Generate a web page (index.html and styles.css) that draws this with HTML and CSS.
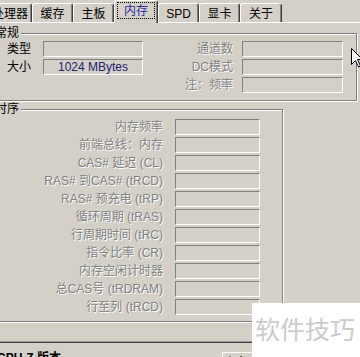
FILE: index.html
```html
<!DOCTYPE html>
<html lang="zh-CN">
<head>
  <meta charset="UTF-8">
  <title>CPU-Z 内存</title>
  <link rel="stylesheet" href="styles.css">
</head>
<body>
  <div class="screen">
    <div class="window">
      <div class="tabs">
        <div class="tab tab-wide">处理器</div>
        <div class="tab">缓存</div>
        <div class="tab">主板</div>
        <div class="tab active"><span class="focus">内存</span></div>
        <div class="tab">SPD</div>
        <div class="tab">显卡</div>
        <div class="tab tab-last">关于</div>
      </div>

      <div class="page">
        <fieldset class="group group-general">
          <legend>常规</legend>
          <div class="general-grid">
            <span class="label">类型</span>
            <span class="field"></span>
            <span class="label-dim">通道数</span>
            <span class="field"></span>

            <span class="label">大小</span>
            <span class="field value">1024 MBytes</span>
            <span class="label-dim">DC模式</span>
            <span class="field"></span>

            <span></span>
            <span></span>
            <span class="label-dim">注：频率</span>
            <span class="field"></span>
          </div>
        </fieldset>

        <fieldset class="group group-timing">
          <legend>时序</legend>
          <div class="timing-grid">
            <span class="label-dim">内存频率</span><span class="field"></span>
            <span class="label-dim">前端总线：内存</span><span class="field"></span>
            <span class="label-dim">CAS# 延迟 (CL)</span><span class="field"></span>
            <span class="label-dim">RAS# 到CAS# (tRCD)</span><span class="field"></span>
            <span class="label-dim">RAS# 预充电 (tRP)</span><span class="field"></span>
            <span class="label-dim">循环周期 (tRAS)</span><span class="field"></span>
            <span class="label-dim">行周期时间 (tRC)</span><span class="field"></span>
            <span class="label-dim">指令比率 (CR)</span><span class="field"></span>
            <span class="label-dim">内存空闲计时器</span><span class="field"></span>
            <span class="label-dim">总CAS号 (tRDRAM)</span><span class="field"></span>
            <span class="label-dim">行至列 (tRCD)</span><span class="field"></span>
          </div>
        </fieldset>
      </div>

      <div class="page-bottom"></div>

      <div class="footer">
        <div class="footer-title">CPU-Z 版本</div>
        <div class="btn">确定</div>
      </div>
    </div>

    <div class="watermark">软件技巧</div>

    <svg class="cursor" width="12" height="20" viewBox="0 0 12 20">
      <path d="M0.5 0.5 L0.5 16.5 L4.5 12.5 L7.5 19 L9.5 18 L6.5 11.5 L11.5 11.5 Z" fill="#fff" stroke="#000" stroke-width="1"/>
    </svg>
  </div>
</body>
</html>
```

FILE: styles.css
```css
html, body {
  margin: 0;
  overflow: hidden;
  background: #d4d0c8;
}

body {
  font-family: "Liberation Sans", "Noto Sans CJK SC", sans-serif;
  font-size: 12px;
  color: #000;
}

.screen {
  width: 360px;
  height: 357px;
  overflow: hidden;
  position: relative;
}

.window {
  width: 400px;
  margin-left: -14px;
}

/* tab strip */
.tabs {
  display: flex;
  align-items: flex-end;
  height: 22px;
  padding-left: 2px;
}

.tab {
  box-sizing: border-box;
  width: 41px;
  height: 19px;
  padding-top: 2px;
  line-height: 16px;
  text-align: center;
  border: 1px solid #fff;
  border-right-color: #404040;
  border-bottom: none;
  border-radius: 3px 3px 0 0;
  box-shadow: inset -1px 0 0 #808080;
}

.tab-wide {
  width: 44px;
}

.tab-last {
  width: 42px;
}

.tab.active {
  width: 44px;
  height: 23px;
  margin-bottom: -1px;
  padding: 1px 2px 0;
  background: #d4d0c8;
  position: relative;
  z-index: 1;
}

.focus {
  display: block;
  height: 16px;
  padding-top: 1px;
  line-height: 16px;
  color: #2a2a9c;
  outline: 1px dotted #000;
  outline-offset: -1px;
}

/* tab page */
.page {
  border-top: 1px solid #fff;
  padding: 3px 0 0 4px;
}

.group {
  margin: 0;
  padding: 0;
  min-width: 0;
  border: 1px solid #808080;
  box-shadow: inset 1px 1px 0 #fff, 1px 1px 0 #fff;
}

.group legend {
  margin-left: 2px;
  padding: 0 2px;
  line-height: 14px;
  background: #d4d0c8;
}

.group-general {
  width: 367px;
  box-sizing: border-box;
}

.group-timing {
  width: 293px;
  box-sizing: border-box;
  margin-top: 1px;
  border-bottom: none;
}

.general-grid {
  display: grid;
  grid-template-columns: 36px 100px 99px 101px;
  grid-auto-rows: 16px;
  row-gap: 2px;
  margin: 1px 0 7px 16px;
  line-height: 16px;
}

.timing-grid {
  display: grid;
  grid-template-columns: 172px 85px;
  grid-auto-rows: 16px;
  row-gap: 2px;
  column-gap: 12px;
  margin: 3px 0 6px 0;
  line-height: 16px;
}

.label {
  white-space: nowrap;
}

.label-dim {
  text-align: right;
  white-space: nowrap;
  color: #808080;
  text-shadow: 1px 1px 0 #fff;
}

.general-grid .label-dim {
  padding-right: 9px;
}

.field {
  box-sizing: border-box;
  height: 16px;
  border-top: 1px solid #808080;
  border-left: 1px solid #808080;
  border-bottom: 1px solid #fff;
  border-right: 1px solid #fff;
}

.field.value {
  text-align: center;
  line-height: 14px;
  color: #22226e;
}

.page-bottom {
  height: 0;
  border-top: 1px solid #808080;
  border-bottom: 1px solid #fff;
}

/* bottom bar */
.footer {
  display: flex;
  align-items: flex-start;
  margin-top: 18px;
  border-top: 1px solid #9a9a9a;
  box-shadow: inset 0 1px 0 #404040;
  height: 20px;
}

.footer-title {
  flex: 0 0 225px;
  padding: 9px 0 0 11px;
  font-weight: bold;
  line-height: 14px;
}

.btn {
  width: 75px;
  height: 22px;
  margin-top: 10px;
  border-top: 1px solid #fff;
  border-left: 1px solid #fff;
}

/* overlays */
.watermark {
  position: absolute;
  left: 252px;
  top: 303px;
  width: 108px;
  height: 54px;
  box-sizing: border-box;
  padding: 10px 0 0 3px;
  background: #fff;
  color: #cbcbcb;
  font-family: "Noto Sans CJK SC", sans-serif;
  font-size: 25px;
  line-height: 30px;
  white-space: nowrap;
}

.cursor {
  position: absolute;
  left: 351px;
  top: 48px;
}
```
